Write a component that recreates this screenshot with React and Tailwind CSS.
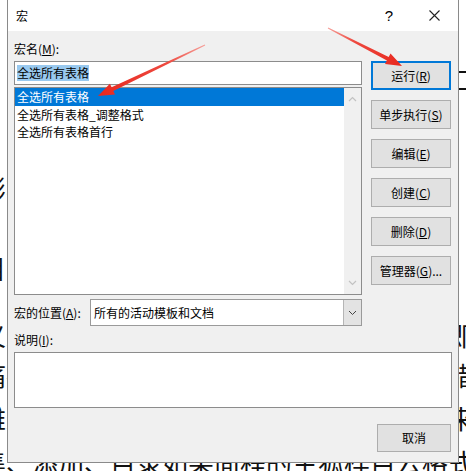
import React from "react";

const bgLines = [
  { mt: "mt-[60px]", pl: "pl-[468px]", t: "口如" },
  { mt: "mt-[68px]", pl: "", t: "彬将所有表格统一选中后再进行调整" },
  { mt: "mt-[40px]", pl: "", t: "目录中的表格也会被一起选中然后统" },
  { mt: "mt-[27px]", pl: "", t: "义宏的代码可以直接复制到编辑器中运行即可完成全部操作" },
  { mt: "mt-[0px]", pl: "", t: "痛在运行宏之前最好先保存文档以免出现错误导致数据务失" },
  { mt: "mt-[3px]", pl: "", t: "雅宏运行完成后所有表格都会被选中接下来就可以统一分设" },
  { mt: "mt-[4px]", pl: "", t: "集、添加、目录如果面程的主狐样目云格式的效果都会同步" },
];

function Btn({ children, def }) {
  return (
    <div
      className={
        "h-[29px] w-[80px] flex items-center justify-center bg-[#e1e1e1] " +
        (def ? "border-2 border-[#0078d7]" : "border border-[#adadad]")
      }
    >
      {children}
    </div>
  );
}

export default function App() {
  return (
    <div className="relative w-[466px] h-[471px] overflow-hidden bg-white font-['Noto_Sans_CJK_SC',sans-serif]">
      {/* background document */}
      <div className="flex flex-col ml-[-20px] text-[26px] leading-[40px] text-[#111] whitespace-nowrap">
        {bgLines.map((l, i) => (
          <div key={i} className={"h-[40px] " + l.mt + " " + l.pl}>
            {l.t}
          </div>
        ))}
      </div>

      {/* dialog */}
      <div className="absolute left-[7px] top-0 w-[452px] h-[463px] border-x border-b border-[#8a8a8a] flex flex-col bg-[#f0f0f0] text-[12px] leading-[16px] text-black">
        <div className="h-[31px] bg-white flex items-center pl-[8px] shrink-0">
          <span>宏</span>
          <span className="ml-auto text-[15px] font-['Liberation_Sans',sans-serif] mr-[36px]">?</span>
          <svg width="11" height="11" viewBox="0 0 11 11" className="mr-[18px]">
            <path d="M0.5 0.5 L10.5 10.5 M10.5 0.5 L0.5 10.5" stroke="#222" strokeWidth="1.1" />
          </svg>
        </div>

        <div className="flex flex-col pl-[6px] pr-[6px]">
          <div className="flex gap-[9px]">
            <div className="w-[348px] flex flex-col pt-[10px]">
              <div className="h-[16px]">
                宏名(<u>M</u>):
              </div>
              <div className="mt-[4px] h-[24px] border border-[#8c8c8c] bg-white flex items-center pl-[2px]">
                <span className="bg-[#99c9ef]">全选所有表格</span>
              </div>
              <div className="mt-[2px] h-[208px] border border-[#8c8c8c] bg-white flex">
                <div className="flex-1 flex flex-col">
                  <div className="h-[18px] bg-[#0078d7] text-white flex items-center pl-[2px]">全选所有表格</div>
                  <div className="h-[17px] flex items-center pl-[2px]">全选所有表格_调整格式</div>
                  <div className="h-[17px] flex items-center pl-[2px]">全选所有表格首行</div>
                </div>
                <div className="w-[17px] bg-[#f0f0f0] flex flex-col items-center justify-between py-[8px]">
                  <svg width="9" height="6" viewBox="0 0 9 6">
                    <path d="M1 5 L4.5 1.5 L8 5" fill="none" stroke="#c2c2c2" strokeWidth="1.2" />
                  </svg>
                  <svg width="9" height="6" viewBox="0 0 9 6">
                    <path d="M1 1 L4.5 4.5 L8 1" fill="none" stroke="#c2c2c2" strokeWidth="1.2" />
                  </svg>
                </div>
              </div>
            </div>
            <div className="w-[80px] flex flex-col pt-[30px] gap-[10px]">
              <Btn def>
                运行(<u>R</u>)
              </Btn>
              <Btn>
                单步执行(<u>S</u>)
              </Btn>
              <Btn>
                编辑(<u>E</u>)
              </Btn>
              <Btn>
                创建(<u>C</u>)
              </Btn>
              <Btn>
                删除(<u>D</u>)
              </Btn>
              <Btn>
                管理器(<u>G</u>)...
              </Btn>
            </div>
          </div>

          <div className="mt-[4px] h-[27px] flex items-center">
            <div className="w-[76px]">
              宏的位置(<u>A</u>):
            </div>
            <div className="w-[272px] h-[27px] border border-[#9a9a9a] bg-white flex items-center">
              <span className="pl-[3px] flex-1">所有的活动模板和文档</span>
              <div className="w-[18px] h-full bg-[#e3e3e3] border-l border-[#b5b5b5] flex items-center justify-center">
                <svg width="9" height="6" viewBox="0 0 9 6">
                  <path d="M1 1 L4.5 4.5 L8 1" fill="none" stroke="#444" strokeWidth="1" />
                </svg>
              </div>
            </div>
          </div>

          <div className="mt-[6px] h-[16px]">
            说明(<u>I</u>):
          </div>
          <div className="mt-[4px] h-[56px] w-[438px] border border-[#8c8c8c] bg-white"></div>

          <div className="mt-[16px] flex justify-end pr-[1px]">
            <div className="h-[28px] w-[74px] flex items-center justify-center bg-[#e1e1e1] border border-[#adadad]">
              取消
            </div>
          </div>
        </div>
      </div>

      {/* red arrows */}
      <svg className="absolute left-0 top-0 pointer-events-none" width="466" height="471" viewBox="0 0 466 471">
        <defs>
          <linearGradient id="g1" x1="205" y1="45" x2="98" y2="96" gradientUnits="userSpaceOnUse">
            <stop offset="0" stopColor="#f6a09a" />
            <stop offset="0.35" stopColor="#ee4a40" />
            <stop offset="1" stopColor="#e8271d" />
          </linearGradient>
          <linearGradient id="g2" x1="328" y1="28" x2="402" y2="66" gradientUnits="userSpaceOnUse">
            <stop offset="0" stopColor="#f6a09a" />
            <stop offset="0.35" stopColor="#ee4a40" />
            <stop offset="1" stopColor="#e8271d" />
          </linearGradient>
        </defs>
        <polygon
          points="204.8,44.5 111.6,87.3 109.9,83.7 98,96 115.0,94.5 113.3,90.9 205.2,45.5"
          fill="url(#g1)"
        />
        <polygon
          points="327.8,28.4 386.9,60.5 385.0,64.0 402,66 390.5,53.4 388.7,56.9 328.2,27.6"
          fill="url(#g2)"
        />
      </svg>
    </div>
  );
}
